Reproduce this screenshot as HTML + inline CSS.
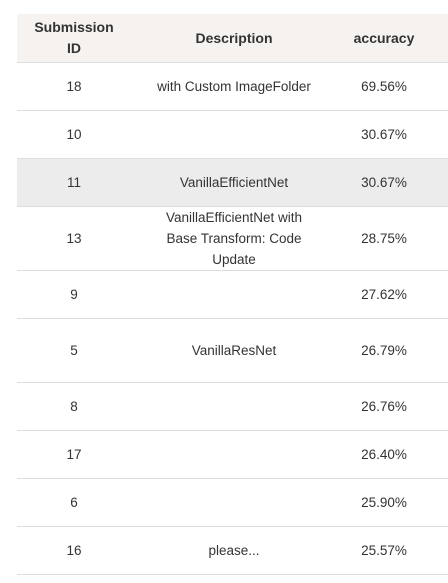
<!DOCTYPE html>
<html><head><style>
body{margin:0;background:#fff;font-family:"Liberation Sans",sans-serif;font-size:13.5px;color:#333;}
table{position:absolute;left:17px;top:14px;width:431px;border-collapse:collapse;}
td,th{text-align:center;border-bottom:1px solid #ddd;padding:0;line-height:21px;}
th{background:#f6f2f0;height:48px;font-weight:bold;color:#333;font-size:14px;}
td{height:47px;}
tr.hl td{background:#ececec;}
</style></head><body>
<table>
<colgroup><col style="width:114px"><col style="width:206px"><col style="width:94px"><col style="width:17px"></colgroup>
<tr><th>Submission<br>ID</th><th>Description</th><th>accuracy</th><th></th></tr>
<tr><td>18</td><td>with Custom ImageFolder</td><td>69.56%</td><td></td></tr>
<tr><td>10</td><td></td><td>30.67%</td><td></td></tr>
<tr class="hl"><td>11</td><td>VanillaEfficientNet</td><td>30.67%</td><td></td></tr>
<tr><td style="height:63px">13</td><td>VanillaEfficientNet with<br>Base Transform: Code<br>Update</td><td>28.75%</td><td></td></tr>
<tr><td>9</td><td></td><td>27.62%</td><td></td></tr>
<tr><td style="height:63px">5</td><td>VanillaResNet</td><td>26.79%</td><td></td></tr>
<tr><td>8</td><td></td><td>26.76%</td><td></td></tr>
<tr><td>17</td><td></td><td>26.40%</td><td></td></tr>
<tr><td>6</td><td></td><td>25.90%</td><td></td></tr>
<tr><td>16</td><td>please...</td><td>25.57%</td><td></td></tr>
</table>
</body></html>
